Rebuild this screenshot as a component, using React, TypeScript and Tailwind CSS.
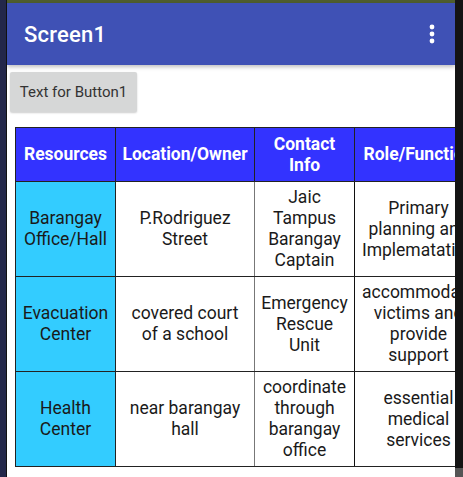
import React from "react";

const rows = [
  {
    resource: ["Barangay", "Office/Hall"],
    location: ["P.Rodriguez", "Street"],
    contact: ["Jaic", "Tampus", "Barangay", "Captain"],
    role: ["Primary", "planning and", "Implematation"],
  },
  {
    resource: ["Evacuation", "Center"],
    location: ["covered court", "of a school"],
    contact: ["Emergency", "Rescue", "Unit"],
    role: ["accommodate", "victims and", "provide", "support"],
  },
  {
    resource: ["Health", "Center"],
    location: ["near barangay", "hall"],
    contact: ["coordinate", "through", "barangay", "office"],
    role: ["essential", "medical", "services"],
  },
];

function Lines({ lines }: { lines: string[] }) {
  return (
    <>
      {lines.map((l, i) => (
        <div key={i} className="whitespace-nowrap">
          {l}
        </div>
      ))}
    </>
  );
}

export default function App() {
  return (
    <div
      className="flex w-[463px] h-[477px] overflow-hidden bg-white"
      style={{ fontFamily: "Roboto, 'Liberation Sans', sans-serif" }}
    >
      <div className="w-[6px] h-full bg-[#23274a]" />
      <div className="w-[1px] h-full bg-[#111]" />

      <div className="w-[448px] h-full flex flex-col overflow-hidden">
        <div className="h-[3px] bg-[#4f5e2e]" />
        <div className="h-[62px] bg-[#3f51b5] flex items-center justify-between pl-[17px] pr-[20px] shadow-[0_2px_4px_rgba(0,0,0,0.25)] relative z-10">
          <span className="text-white text-[22px] font-medium tracking-[0.2px]">
            Screen1
          </span>
          <svg width="6" height="20" viewBox="0 0 6 20">
            <circle cx="3" cy="3" r="2.4" fill="white" />
            <circle cx="3" cy="10" r="2.4" fill="white" />
            <circle cx="3" cy="17" r="2.4" fill="white" />
          </svg>
        </div>

        <div className="pl-[3px] pt-[7px]">
          <button className="w-[127px] h-[40px] bg-[#d6d7d7] rounded-[2px] text-[15px] text-[#333] shadow-[0_1px_2px_rgba(0,0,0,0.2)]">
            Text for Button1
          </button>
        </div>

        <div className="pl-[8px] pt-[15px]">
          <table className="border-collapse table-fixed w-[467px] text-[17.5px] leading-[21px] text-center">
            <colgroup>
              <col className="w-[100px]" />
              <col className="w-[139px]" />
              <col className="w-[100px]" />
              <col className="w-[128px]" />
            </colgroup>
            <thead>
              <tr className="h-[54px] bg-[#3333ff] text-white font-bold">
                <th className="border border-[#222] px-0">Resources</th>
                <th className="border border-[#222] px-0 whitespace-nowrap">Location/Owner</th>
                <th className="border border-[#222] px-0">
                  <div>Contact</div>
                  <div>Info</div>
                </th>
                <th className="border border-[#222] px-0 whitespace-nowrap">Role/Function</th>
              </tr>
            </thead>
            <tbody className="text-[#1a1a1a]">
              {rows.map((r, i) => (
                <tr key={i} className="h-[95px]">
                  <td className={`bg-[#33ccff] border-l border-r border-[#222] ${i === 2 ? "border-t-[#bbb]" : ""} border-t border-b`}>
                    <Lines lines={r.resource} />
                  </td>
                  <td className={`border-t border-b border-r border-r-[#777] ${i === 2 ? "border-t-[#bbb]" : "border-t-[#222]"} border-b-[#222]`}>
                    <Lines lines={r.location} />
                  </td>
                  <td className={`border-t border-b border-r border-r-[#111] ${i === 2 ? "border-t-[#bbb]" : "border-t-[#222]"} border-b-[#222]`}>
                    <Lines lines={r.contact} />
                  </td>
                  <td className={`border-t border-b border-r border-[#222] ${i === 2 ? "border-t-[#bbb]" : ""}`}>
                    <Lines lines={r.role} />
                  </td>
                </tr>
              ))}
            </tbody>
          </table>
        </div>
      </div>

      <div className="w-[8px] h-full bg-[#141414] flex flex-col justify-end">
        <div className="h-[9px] bg-[#555]" />
      </div>
    </div>
  );
}
